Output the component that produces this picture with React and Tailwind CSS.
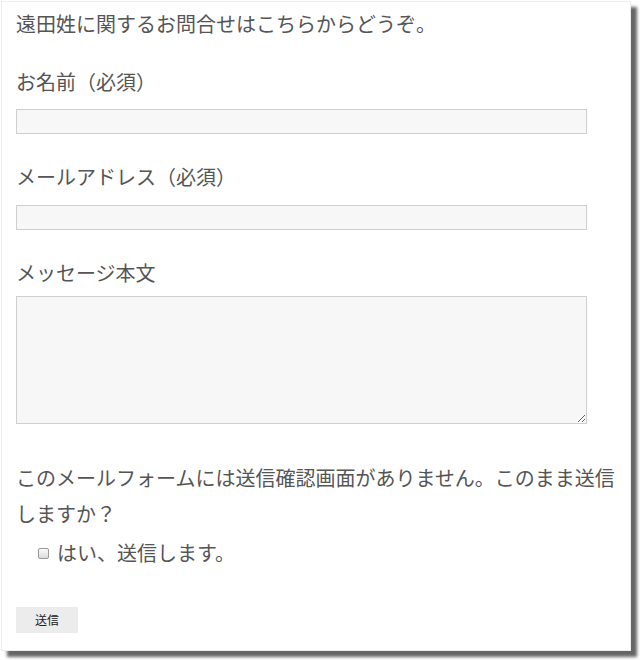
export default function App() {
  const font = { fontFamily: '"Noto Sans CJK JP", "Noto Sans", sans-serif' };
  return (
    <div className="w-[640px] h-[660px] bg-white pt-[1px] pl-[1px]" style={font}>
      <div className="w-[630px] h-[650px] bg-white border border-[#ececec] shadow-[6px_6px_3px_rgba(0,0,0,0.6)] px-[14px] pt-[4px] text-[#555] text-[20px] leading-[36px]">
        <p>遠田姓に関するお問合せはこちらからどうぞ。</p>
        <p className="mt-[22px]">お名前（必須）</p>
        <div className="mt-[9px] w-[571px] h-[25px] bg-[#f7f7f7] border border-[#cfcfcf]"></div>
        <p className="mt-[25px]">メールアドレス（必須）</p>
        <div className="mt-[10px] w-[571px] h-[25px] bg-[#f7f7f7] border border-[#cfcfcf]"></div>
        <p className="mt-[25px]">メッセージ本文</p>
        <textarea className="block mt-[5px] w-[571px] h-[128px] bg-[#f7f7f7] border border-[#cfcfcf] outline-none" readOnly></textarea>
        <p className="mt-[36px] w-[610px]">このメールフォームには送信確認画面がありません。このまま送信<br />しますか？</p>
        <div className="mt-[3px] flex items-center pl-[22px] gap-[8px]">
          <span className="w-[11px] h-[11px] rounded-[2px] border border-[#999] bg-gradient-to-b from-[#fafafa] to-[#dcdcdc]"></span>
          <span>はい、送信します。</span>
        </div>
        <div className="mt-[36px] w-[62px] h-[26px] bg-[#ececec] flex items-center justify-center text-[12px] leading-none text-[#222]">送信</div>
      </div>
    </div>
  );
}
